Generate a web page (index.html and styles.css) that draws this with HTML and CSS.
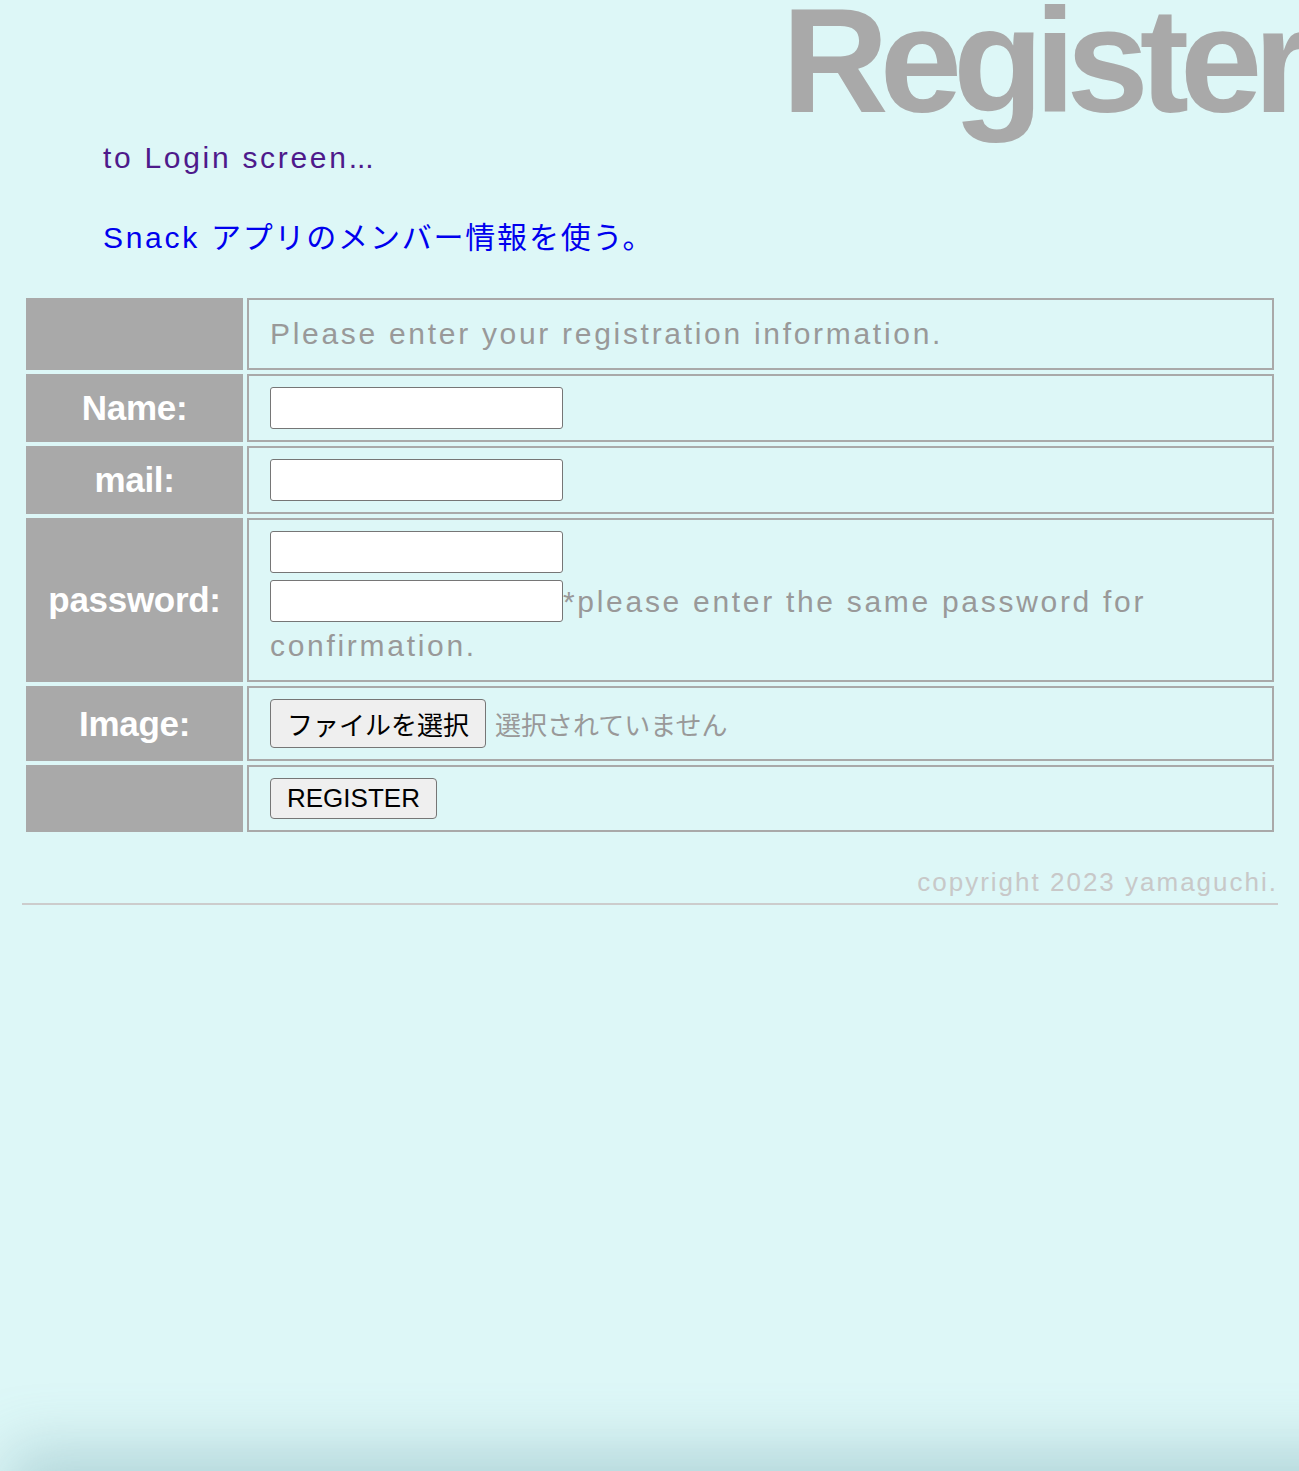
FILE: index.html
```html
<!DOCTYPE html>
<html lang="ja">
<head>
<meta charset="utf-8">
<title>Register</title>
<link rel="stylesheet" href="styles.css">
</head>
<body>
<div class="page">
  <h1 class="title">Register</h1>
  <p class="nav nav-first"><a class="visited latin" href="#login">to Login screen<span class="dots">...</span></a></p>
  <p class="nav nav-second"><a class="latin" href="#snack">Snack <span class="ja">アプリのメンバー情報を使う。</span></a></p>
  <table class="form-table">
    <tr>
      <th></th>
      <td class="intro latin">Please enter your registration information.</td>
    </tr>
    <tr>
      <th>Name:</th>
      <td><input class="field field-block" type="text"></td>
    </tr>
    <tr>
      <th>mail:</th>
      <td><input class="field field-block" type="text"></td>
    </tr>
    <tr>
      <th>password:</th>
      <td class="pw">
        <input class="field field-block field-first" type="password">
        <div class="pw-line latin"><input class="field field-inline" type="password">*please enter the same password for confirmation.</div>
      </td>
    </tr>
    <tr>
      <th>Image:</th>
      <td class="file-cell"><span class="file"><button class="btn btn-file" type="button">ファイルを選択</button><span class="file-none">選択されていません</span></span></td>
    </tr>
    <tr>
      <th></th>
      <td><button class="btn btn-submit" type="button">REGISTER</button></td>
    </tr>
  </table>
  <footer class="footer">copyright 2023 yamaguchi.</footer>
</div>
</body>
</html>
```
FILE: styles.css
```css
html {
  background: #ddf7f7;
}
body {
  margin: 0;
  min-height: 1471px;
  background: #ddf7f7;
  font-family: "Liberation Sans", "Noto Sans CJK JP", sans-serif;
  overflow-x: hidden;
}
body::after {
  content: "";
  position: fixed;
  left: 30px;
  right: -80px;
  bottom: -80px;
  height: 80px;
  box-shadow: 0 0 60px 22px rgba(110, 160, 170, 0.38);
  pointer-events: none;
}
.page {
  margin: 0 21px 0 22px;
}
.latin {
  letter-spacing: 0.09em;
}
.dots {
  letter-spacing: 0;
}
.ja {
  letter-spacing: 0.06em;
}
.title {
  margin: -13px -24px -12px 0;
  font-family: "Liberation Sans", sans-serif;
  font-weight: bold;
  font-size: 148px;
  line-height: 148px;
  letter-spacing: -9px;
  color: #a9a9a9;
  text-align: right;
  white-space: nowrap;
}
.nav {
  margin: 0;
  padding-left: 81px;
  font-size: 30px;
  line-height: 44px;
}
.nav-first {
  margin-top: 13px;
}
.nav a {
  color: #0000ee;
  text-decoration: none;
}
.nav a.visited {
  color: #4e1a8b;
}
.nav-second {
  margin-top: 36px;
}
.form-table {
  margin-top: 34px;
  width: 100%;
  border-collapse: separate;
  border-spacing: 4px;
}
.form-table th {
  width: 213px;
  background: #a9a9a9;
  border: 2px solid #a9a9a9;
  color: #ffffff;
  font-family: "Liberation Sans", sans-serif;
  font-weight: bold;
  font-size: 35px;
  letter-spacing: -0.3px;
  text-align: center;
  padding: 0;
}
.form-table td {
  border: 2px solid #a9a9a9;
  padding: 11px 21px;
  color: #999999;
  font-size: 30px;
  line-height: 44px;
}
.form-table td.intro {
  padding-top: 12px;
  padding-bottom: 12px;
}
.form-table td.pw {
  padding-bottom: 12px;
}
.form-table td.file-cell {
  padding-top: 11px;
  padding-bottom: 11px;
}
.field {
  box-sizing: border-box;
  width: 293px;
  height: 42px;
  margin: 0;
  border: 1px solid #767676;
  border-radius: 3px;
  background: #ffffff;
  font-size: 26px;
}
.field-block {
  display: block;
}
.field-first {
  margin-bottom: 7px;
}
.field-inline {
  vertical-align: top;
}
.file {
  display: flex;
  align-items: center;
  gap: 9px;
}
.btn {
  box-sizing: border-box;
  margin: 0;
  background: #efefef;
  border: 1px solid #767676;
  border-radius: 4px;
  color: #000000;
  font-family: "Liberation Sans", sans-serif;
  font-size: 26px;
  padding: 0 15px;
}
.btn-file {
  height: 49px;
  font-family: "Noto Sans CJK JP", sans-serif;
  padding: 0 16px;
}
.file-none {
  font-family: "Noto Sans CJK JP", sans-serif;
  font-size: 26px;
  color: #999999;
}
.btn-submit {
  display: block;
  height: 41px;
  padding: 0 16px;
}
.footer {
  margin-top: 28px;
  padding-bottom: 3px;
  border-bottom: 2px solid #cccccc;
  text-align: right;
  font-size: 26px;
  letter-spacing: 2px;
  line-height: 36px;
  color: #c8c8c8;
}
```
